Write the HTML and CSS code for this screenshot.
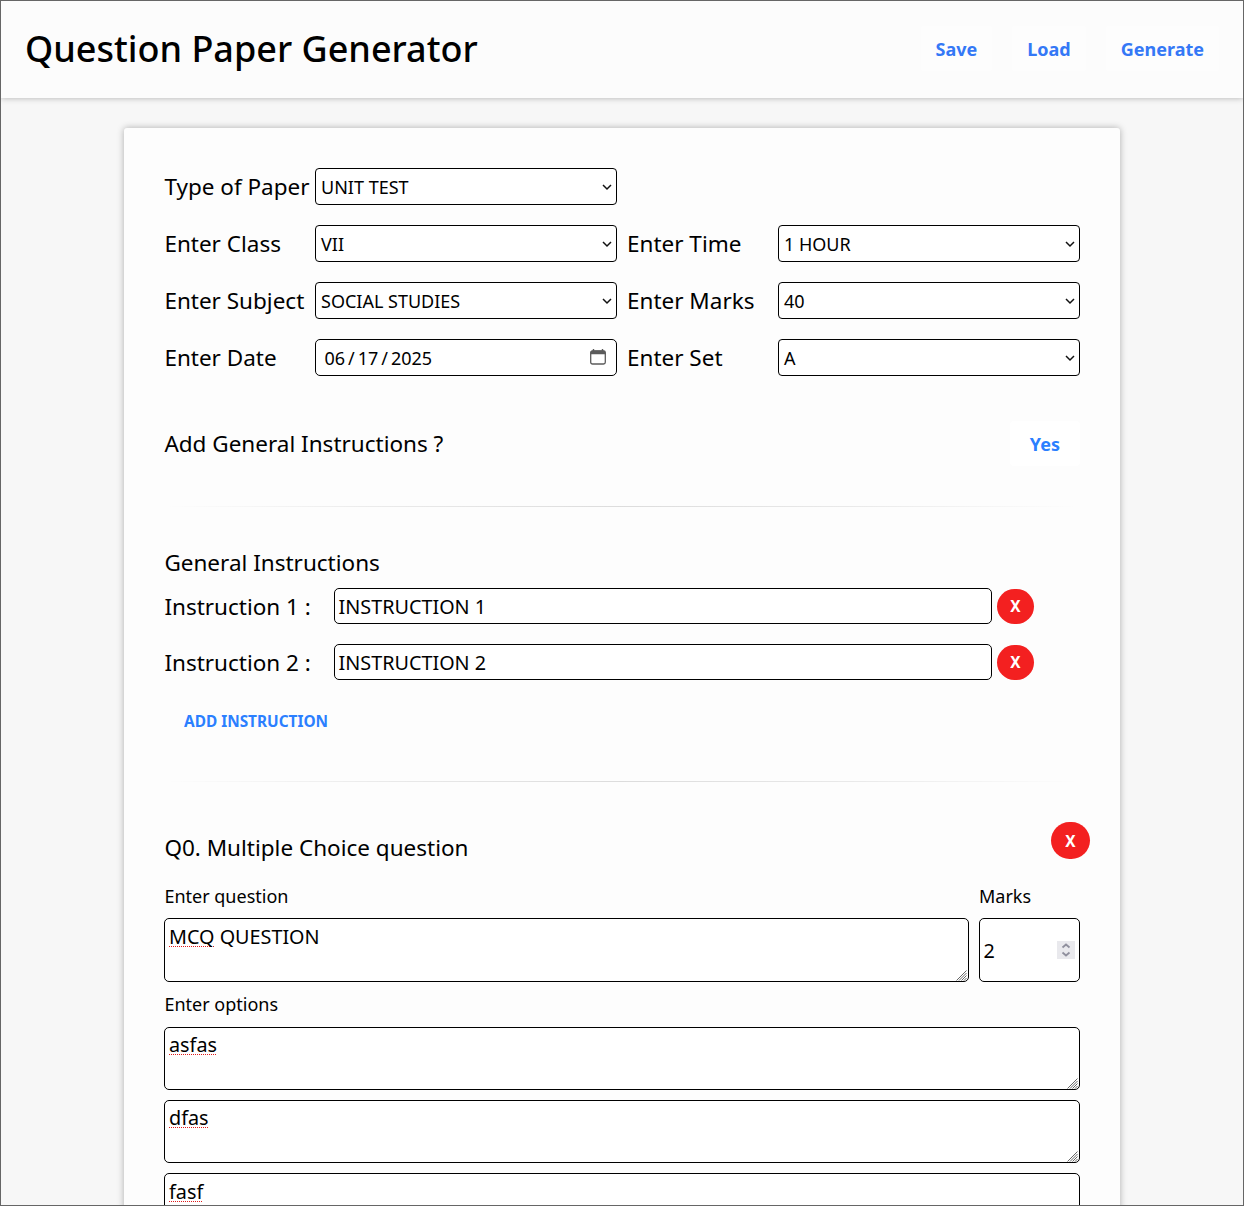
FILE: index.html
```html
<!DOCTYPE html>
<html lang="en">
<head>
<meta charset="utf-8">
<title>Question Paper Generator</title>
<link rel="stylesheet" href="styles.css">
</head>
<body>
<svg class="defs" aria-hidden="true">
  <symbol id="chevron" viewBox="0 0 10 8"><path d="M1 2l4 4 4-4" fill="none" stroke="#111" stroke-width="1.5"/></symbol>
  <symbol id="grip" viewBox="0 0 11 11"><path d="M0.500 10.500l10-10M3 10.500l7.500-7.500M5.500 10.500l5-5M8 10.500l2.500-2.500" fill="none" stroke="#555" stroke-width="0.900"/></symbol>
</svg>
<div class="app">
  <header class="topbar">
    <h1 class="title">Question Paper Generator</h1>
    <nav class="actions">
      <button class="button">Save</button>
      <button class="button">Load</button>
      <button class="button">Generate</button>
    </nav>
  </header>
  <main class="card">
    <section class="details">
      <span class="label">Type of Paper</span>
      <div class="field select"><span>UNIT TEST</span><svg class="chevron"><use href="#chevron"/></svg></div>
      <span></span><span></span>
      <span class="label">Enter Class</span>
      <div class="field select"><span>VII</span><svg class="chevron"><use href="#chevron"/></svg></div>
      <span class="label second">Enter Time</span>
      <div class="field select"><span>1 HOUR</span><svg class="chevron"><use href="#chevron"/></svg></div>
      <span class="label">Enter Subject</span>
      <div class="field select"><span>SOCIAL STUDIES</span><svg class="chevron"><use href="#chevron"/></svg></div>
      <span class="label second">Enter Marks</span>
      <div class="field select"><span>40</span><svg class="chevron"><use href="#chevron"/></svg></div>
      <span class="label">Enter Date</span>
      <div class="field date"><span class="date-value"><span>06</span><span>/</span><span>17</span><span>/</span><span>2025</span></span>
        <svg class="calendar" viewBox="0 0 16 16"><path d="M3.500 0v2M12.500 0v2" stroke="#5b5b5b" stroke-width="1.400"/><rect x="0.700" y="2" width="14.600" height="13" rx="1.800" fill="none" stroke="#5b5b5b" stroke-width="1.300"/><path d="M0.500 5.200V3.500q0-2 2-2h11q2 0 2 2v1.700z" fill="#5b5b5b"/></svg>
      </div>
      <span class="label second">Enter Set</span>
      <div class="field select"><span>A</span><svg class="chevron"><use href="#chevron"/></svg></div>
    </section>

    <section class="toggle">
      <span class="label">Add General Instructions ?</span>
      <button class="button yes">Yes</button>
    </section>
    <div class="divider"></div>

    <section class="instructions">
      <h2 class="label">General Instructions</h2>
      <div class="instruction"><span class="label">Instruction 1 :</span><div class="entry">INSTRUCTION 1</div><button class="remove"><span class="narrow">X</span></button></div>
      <div class="instruction"><span class="label">Instruction 2 :</span><div class="entry">INSTRUCTION 2</div><button class="remove"><span class="narrow">X</span></button></div>
      <button class="add"><span class="narrow">ADD INSTRUCTION</span></button>
    </section>
    <div class="divider"></div>

    <section class="question">
      <div class="question-head"><h2 class="label">Q0. Multiple Choice question</h2><button class="remove large"><span class="narrow">X</span></button></div>
      <div class="question-row">
        <div class="caption">Enter question</div><div class="caption marks-caption">Marks</div>
        <div class="area tall"><span class="misspelt">MCQ</span> QUESTION<svg class="grip"><use href="#grip"/></svg></div>
        <div class="marks"><span>2</span><svg class="spinner" viewBox="0 0 18 18"><rect width="18" height="18" fill="#e9e9ed"/><path d="M5.500 6.500L9 3.500l3.500 3M5.500 11.500l3.500 3 3.500-3" fill="none" stroke="#8f8f9d" stroke-width="1.800"/></svg></div>
      </div>
      <div class="caption options-caption">Enter options</div>
      <div class="options">
        <div class="area"><span class="misspelt">asfas</span><svg class="grip"><use href="#grip"/></svg></div>
        <div class="area"><span class="misspelt">dfas</span><svg class="grip"><use href="#grip"/></svg></div>
        <div class="area"><span class="misspelt">fasf</span><svg class="grip"><use href="#grip"/></svg></div>
      </div>
    </section>
  </main>
</div>
</body>
</html>
```
FILE: styles.css
```css
* { box-sizing: border-box; }
body { margin: 0; font-family: "Noto Sans", sans-serif; color: #000; }
button { font-family: inherit; border: 0; padding: 0; }
h1, h2 { margin: 0; }
.defs { display: none; }
.app { height: 1206px; overflow: hidden; border: 1px solid #666; background: #f7f7f7; }

.topbar { height: 97px; padding: 0 24px 2px; display: flex; align-items: center; justify-content: space-between; background: #fcfcfc; box-shadow: 0 0 6px rgba(0, 0, 0, .3); }
.title { font-size: 36px; font-weight: 500; line-height: 49px; }
.actions { display: flex; gap: 20px; }
.button { height: 45px; padding: 0 15px; border-radius: 4px; background: #fdfdfd; color: #3478f6; font-size: 18px; font-weight: 700; }

.card { width: 996px; height: 1400px; margin: 30px auto 0; padding: 40px; border-radius: 3px; background: #fdfdfd; box-shadow: 0 0 7px rgba(0, 0, 0, .3); }
.label { padding-left: 0.400px; font-size: 22.500px; font-weight: 400; line-height: 30px; white-space: nowrap; }

.details { display: grid; grid-template-columns: 151px 302px 161px 302px; grid-auto-rows: 37px; row-gap: 20px; align-items: center; }
.details .second { padding-left: 10px; }
.field { height: 37px; display: flex; align-items: center; justify-content: space-between; border: 1px solid #000; border-radius: 4px; background: #fff; font-size: 18px; }
.select { padding: 0 4px 0 5px; }
.chevron { width: 10px; height: 8px; }
.date { padding: 0 10px 0 8.400px; border-radius: 5px; }
.date-value { display: flex; gap: 3px; }
.calendar { width: 16px; height: 16px; margin-top: -2px; }

.toggle { height: 45px; margin-top: 45px; display: flex; align-items: center; justify-content: space-between; }
.yes { padding: 0 20px; background: #fff; color: #2b7fff; }
.divider { height: 1px; margin-top: 40px; background: linear-gradient(90deg, rgba(0, 0, 0, 0), rgba(0, 0, 0, .08) 25%, rgba(0, 0, 0, .13) 50%, rgba(0, 0, 0, .08) 75%, rgba(0, 0, 0, 0)); }

.instructions { height: 234px; padding-top: 41px; }
.instruction { height: 36px; margin-bottom: 20px; display: flex; align-items: center; }
.instructions h2 + .instruction { margin-top: 10px; }
.instruction .label { width: 170px; padding-top: 2px; }
.entry { width: 658px; height: 36px; padding: 0 3.600px; border: 1px solid #000; border-radius: 5px; background: #fff; font-size: 19.800px; line-height: 35px; }
.remove { width: 37px; height: 35px; margin-left: 5px; border-radius: 17.500px; background: #f32020; color: #fff; font-size: 16.200px; font-weight: 700; line-height: 35px; }
.add { height: 42px; padding: 0 20.400px; background: transparent; color: #2b7fff; font-size: 16.200px; font-weight: 700; }
.narrow { display: inline-block; transform: scaleX(.95); }
.add .narrow { transform-origin: left; }

.question { padding-top: 40px; }
.question-head { height: 64px; display: flex; justify-content: space-between; }
.question-head .label { padding-top: 11px; }
.large { width: 39px; height: 37px; margin-right: -10px; padding-top: 1px; border-radius: 18.500px; line-height: 37px; }
.question-row { display: grid; grid-template-columns: 805px 101px; column-gap: 10px; grid-template-rows: 32px 64px; }
.caption { padding-left: 0.400px; font-size: 18px; line-height: 21px; }
.marks-caption { padding-left: 0; }
.area { position: relative; height: 63.200px; padding: 3.200px 4px; border: 1px solid #000; border-radius: 5px; background: #fff; font-size: 19.800px; line-height: 27px; }
.tall { height: 64px; padding-top: 4px; }
.misspelt { background: repeating-linear-gradient(90deg, #e01b1b 0 1px, transparent 1px 2px) 0 calc(100% - 3px) / 100% 1px no-repeat; }
.grip { position: absolute; right: 1px; bottom: 0; width: 11px; height: 11px; }
.marks { display: flex; align-items: center; justify-content: space-between; padding: 0 4px 0 3.600px; border: 1px solid #000; border-radius: 5px; background: #fff; font-size: 19.800px; }
.spinner { width: 18px; height: 18px; }
.options-caption { margin: 12px 0; }
.options { display: grid; gap: 10px; }
```
